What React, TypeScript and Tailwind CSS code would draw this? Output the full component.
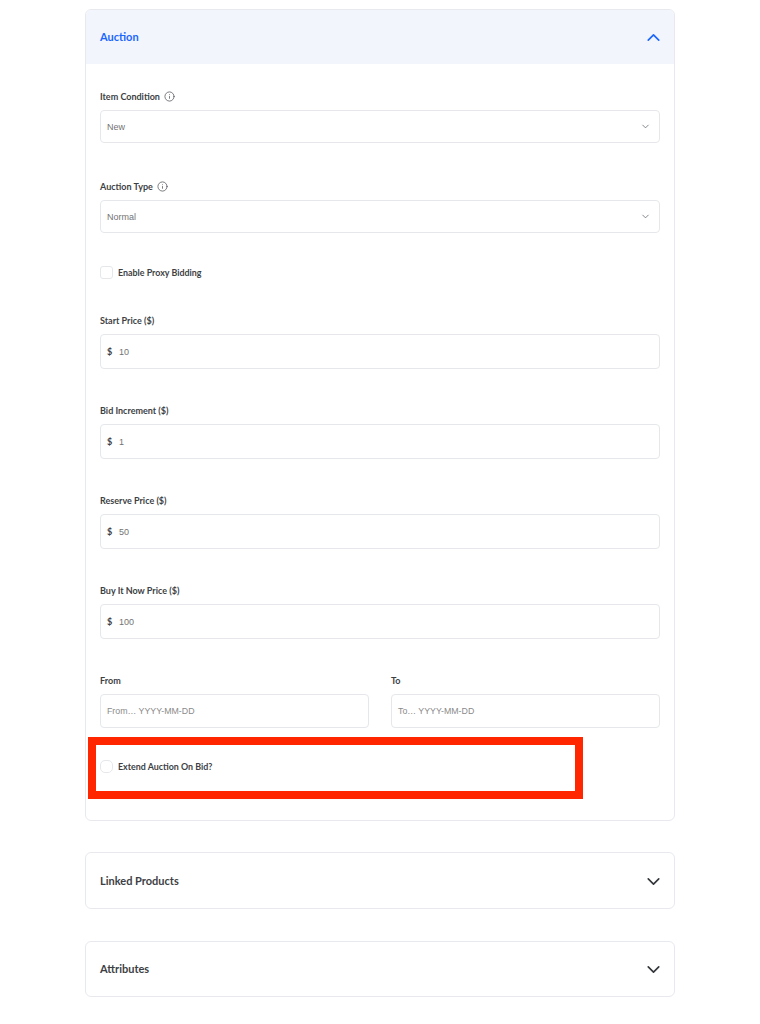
import { ChevronDown, ChevronUp, Info } from 'lucide-react';

const labelClass = "block h-[14px] text-[9px] font-bold leading-[16px] text-[#3d3f44] font-['Lato',sans-serif]";
const boxClass = 'rounded-[4px] border border-[#e5e7eb] bg-white';
const valueClass = "pt-[2px] text-[9px] text-[#737373] font-['Liberation_Sans',sans-serif]";
const placeholderClass = "pt-[1px] text-[8.8px] text-[#8a8a8a] font-['Liberation_Sans',sans-serif]";

function SelectField({ label, value, className }: { label: string; value: string; className?: string }) {
  return (
    <div className={className}>
      <div className="flex items-center gap-[4px]">
        <span className={labelClass}>{label}</span>
        <Info size={11} strokeWidth={1.7} className="text-[#55585e]" />
      </div>
      <div className={`mt-[7px] flex h-[33px] items-center justify-between pl-[6px] pr-[8px] ${boxClass}`}>
        <span className={valueClass}>{value}</span>
        <ChevronDown size={11} strokeWidth={1.8} className="text-[#6b6e74]" />
      </div>
    </div>
  );
}

function PriceField({ label, value }: { label: string; value: string }) {
  return (
    <div className="mt-[34px]">
      <span className={labelClass}>{label}</span>
      <div className={`mt-[7px] flex h-[35px] items-center pl-[6px] ${boxClass}`}>
        <span className="w-[12px] text-[9px] font-bold text-[#3d3f44] font-['Lato',sans-serif]">$</span>
        <span className={valueClass}>{value}</span>
      </div>
    </div>
  );
}

function DateField({ label, placeholder }: { label: string; placeholder: string }) {
  return (
    <div>
      <span className={labelClass}>{label}</span>
      <div className={`mt-[7px] flex h-[34px] items-center pl-[6px] ${boxClass}`}>
        <span className={placeholderClass}>{placeholder}</span>
      </div>
    </div>
  );
}

function CheckRow({ label, round, className }: { label: string; round?: boolean; className?: string }) {
  return (
    <label className={`flex h-[13px] items-center gap-[5px] ${className ?? ''}`}>
      <span className={`h-[13px] w-[13px] border border-[#e5e7eb] bg-white ${round ? 'rounded-[5px]' : 'rounded-[3px]'}`} />
      <span className="text-[8.9px] font-bold text-[#3d3f44] font-['Lato',sans-serif]">{label}</span>
    </label>
  );
}

function CollapsedPanel({ title, className }: { title: string; className?: string }) {
  return (
    <section className={`flex items-center justify-between rounded-[6px] border border-[#e8e9ee] bg-white pl-[14px] pr-[10px] ${className ?? ''}`}>
      <h3 className="text-[11px] font-bold text-[#3d3f44] font-['Lato',sans-serif]">{title}</h3>
      <ChevronDown size={21} strokeWidth={1.9} className="text-[#33363b]" />
    </section>
  );
}

export default function App() {
  return (
    <div className="relative h-[1024px] w-[760px] overflow-hidden bg-white pt-[9px]">
      <div className="mx-[85px] w-[590px]">
        <section className="h-[812px] overflow-hidden rounded-[6px] border border-[#e8e9ee] bg-white">
          <header className="flex h-[54px] items-center justify-between bg-[#f2f5fb] pl-[14px] pr-[10px]">
            <h3 className="text-[11px] font-bold text-[#1a66ff] font-['Lato',sans-serif]">Auction</h3>
            <ChevronUp size={21} strokeWidth={1.9} className="text-[#1a66ff]" />
          </header>

          <div className="px-[14px] pt-[25px]">
            <SelectField label="Item Condition" value="New" />
            <SelectField label="Auction Type" value="Normal" className="mt-[36px]" />
            <CheckRow label="Enable Proxy Bidding" className="mt-[33px]" />
            <PriceField label="Start Price ($)" value="10" />
            <PriceField label="Bid Increment ($)" value="1" />
            <PriceField label="Reserve Price ($)" value="50" />
            <PriceField label="Buy It Now Price ($)" value="100" />

            <div className="mt-[34px] grid grid-cols-2 gap-[22px]">
              <DateField label="From" placeholder="From… YYYY-MM-DD" />
              <DateField label="To" placeholder="To… YYYY-MM-DD" />
            </div>

            <CheckRow label="Extend Auction On Bid?" round className="mt-[32px]" />
          </div>
        </section>

        <CollapsedPanel title="Linked Products" className="mt-[31px] h-[57px] pt-[1px]" />
        <CollapsedPanel title="Attributes" className="mt-[32px] h-[56px]" />
      </div>

      {/* annotation drawn over the screenshot */}
      <div className="absolute left-[88px] top-[737px] h-[62px] w-[495px] border-[8px] border-[#ff2600]" />
    </div>
  );
}
